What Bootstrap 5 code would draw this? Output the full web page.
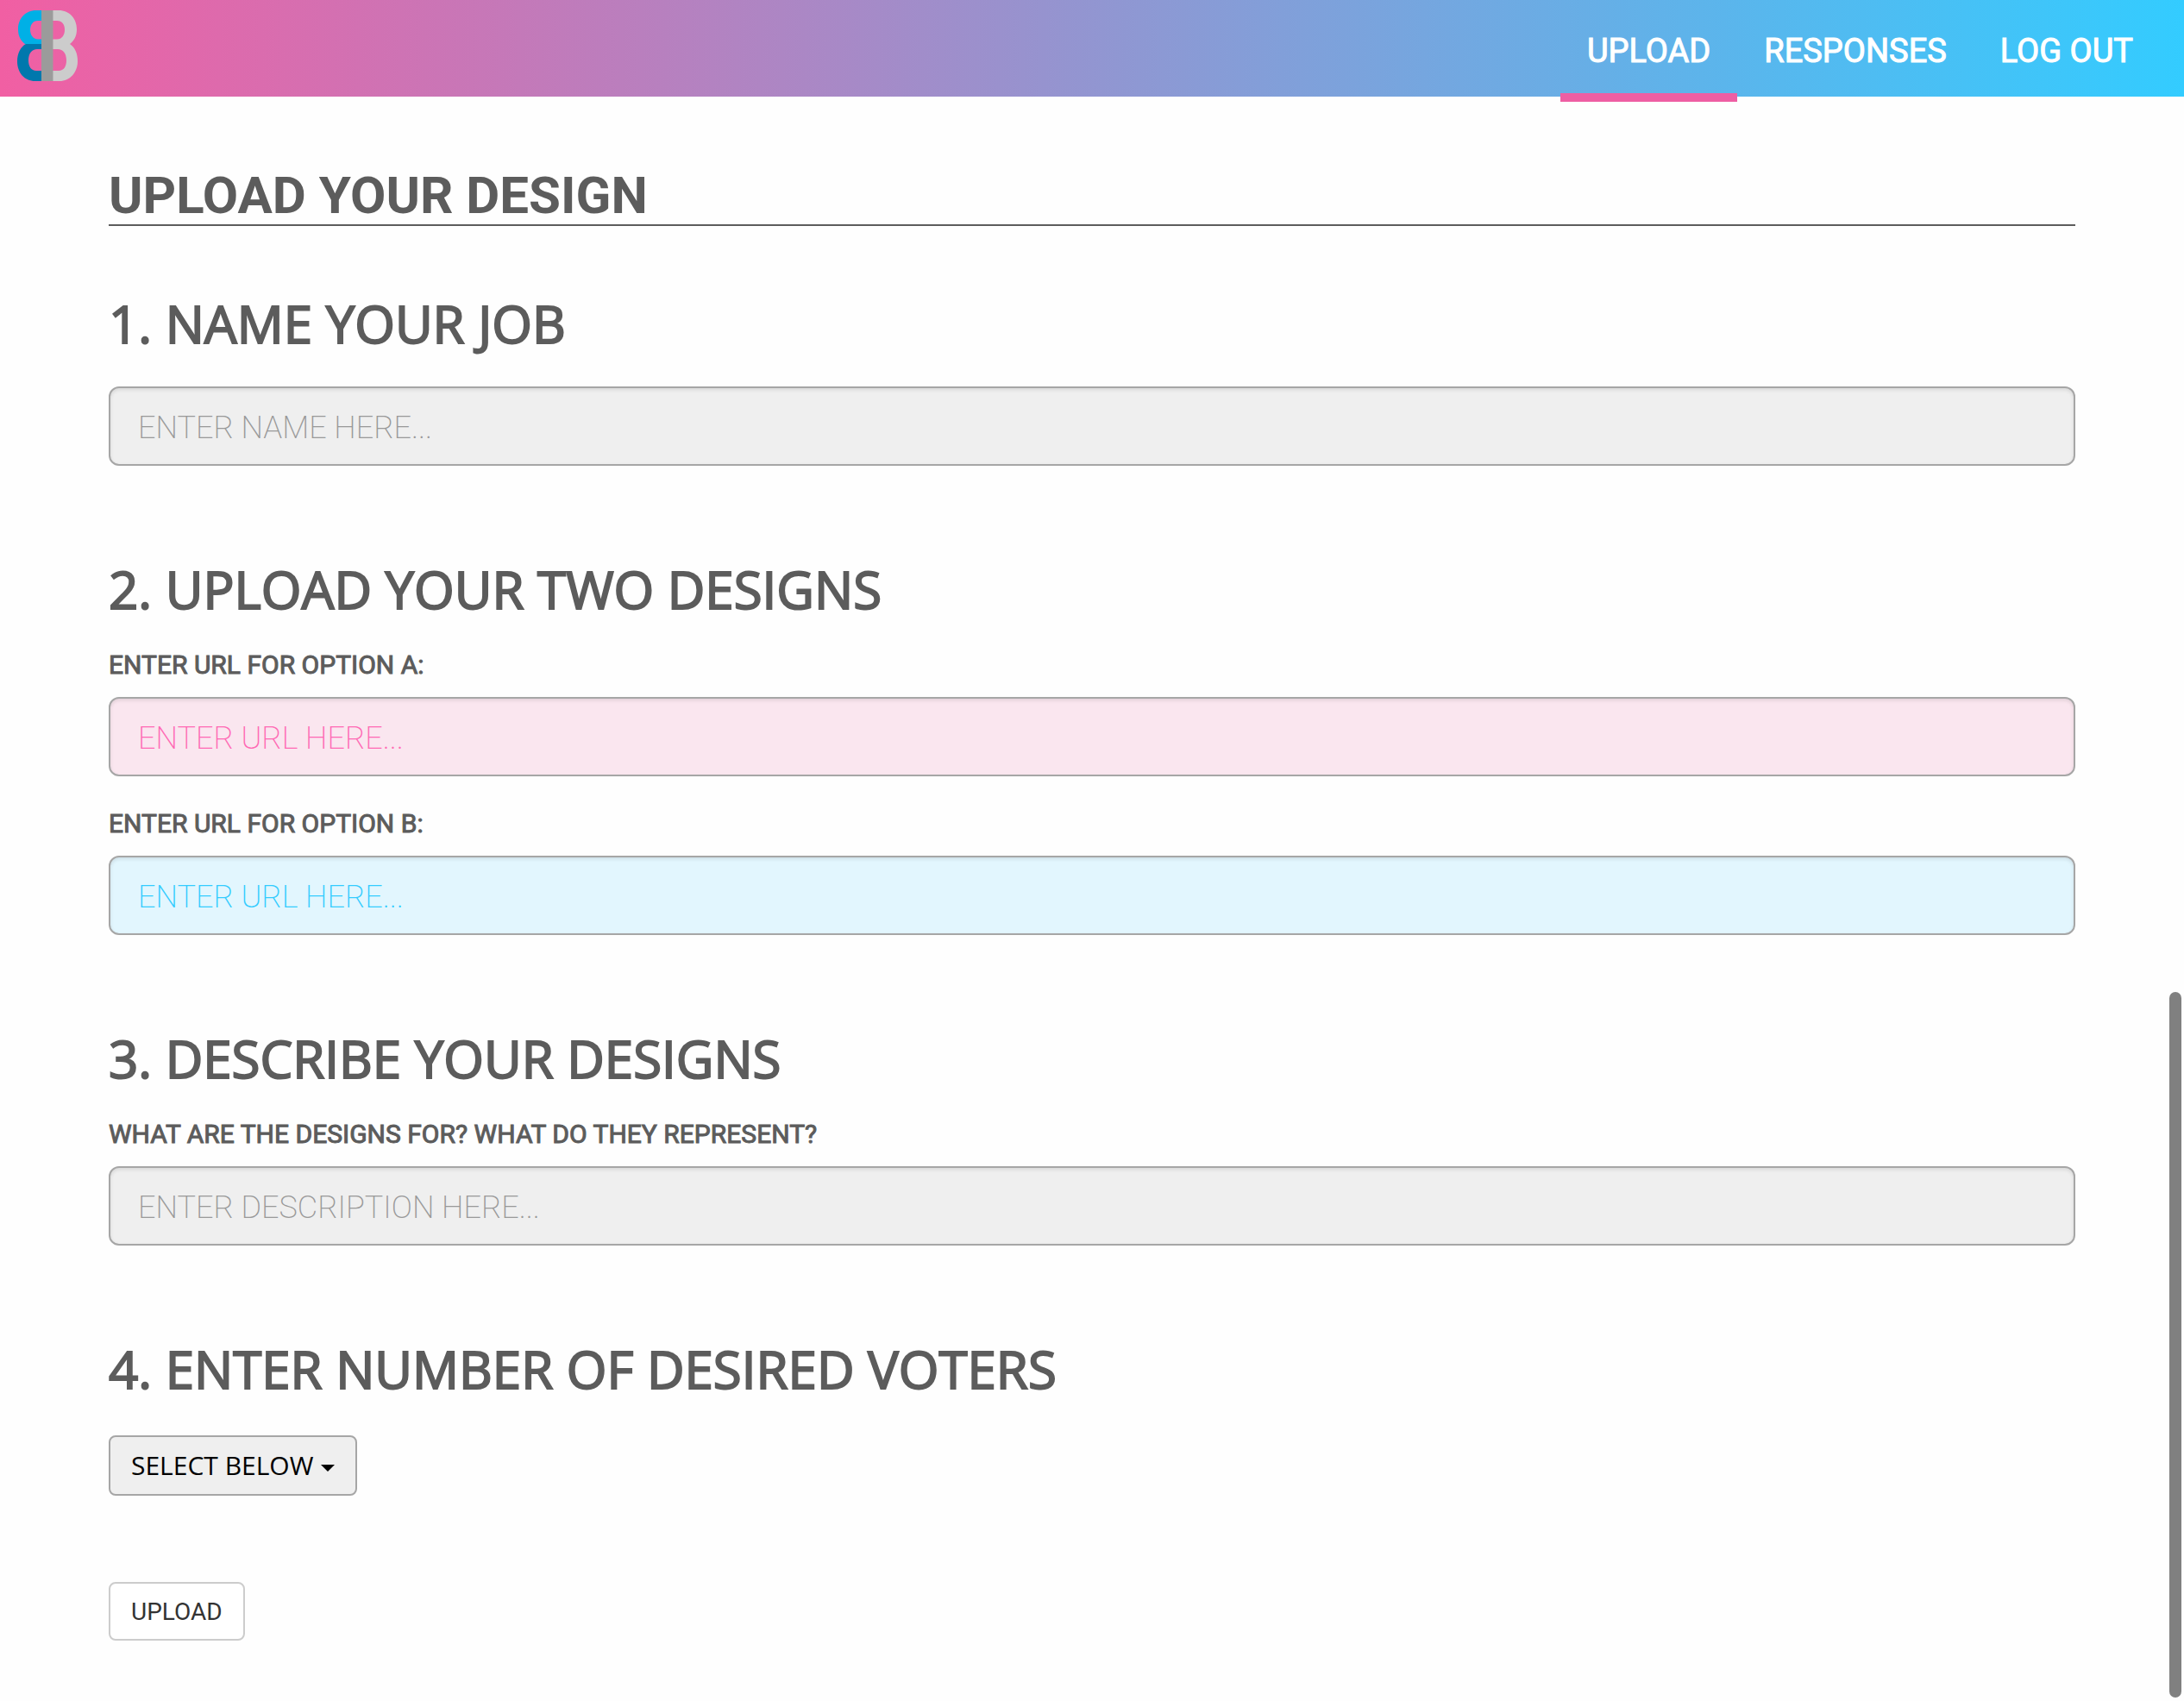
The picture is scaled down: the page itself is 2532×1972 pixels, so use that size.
<!DOCTYPE html>
<html lang="en">
<head>
<meta charset="utf-8">
<meta name="viewport" content="width=device-width, initial-scale=1">
<title>Upload your design</title>
<link href="https://cdn.jsdelivr.net/npm/bootstrap@5.3.0/dist/css/bootstrap.min.css" rel="stylesheet">
<style>
  body { font-family: Roboto, sans-serif; color: #5c5c5c; background: #fefefe; text-transform: uppercase; }
  .site-nav { height: 112px; padding: 0 28px 0 20px; background: linear-gradient(to right, #f15fa3, #33ccff); }
  .site-nav .nav-link { height: 118px; padding: 0 31px; font-size: 38px; line-height: 118px; font-weight: 400; -webkit-text-stroke: 1px; color: #fff; border-bottom: 10px solid transparent; }
  .site-nav .nav-link.active { border-bottom-color: #ee5ea3; }
  .brand-mark { display: block; width: 70px; height: 82px; }
  .page-body { padding: 82px 126px 68px; }
  .page-title { font-size: 60px; line-height: 66px; font-weight: 700; margin-bottom: 78px; border-bottom: 2px solid #5c5c5c; }
  .step { margin-bottom: 108px; }
  .step:last-of-type { margin-bottom: 100px; }
  .step-title { font-family: "Open Sans", sans-serif; font-size: 60px; line-height: 70px; font-weight: 400; -webkit-text-stroke: 2px; margin-bottom: 38px; }
  .step-title.tight { margin-bottom: 32px; }
  .field-label { display: block; font-size: 30px; line-height: 42px; font-weight: 400; -webkit-text-stroke: 1px; margin-bottom: 16px; }
  .field-label.next { margin-top: 34px; }
  .field-box { height: 92px; padding: 3px 32px 0; font-size: 36px; font-weight: 200; text-transform: uppercase; color: #5c5c5c; background: #efefef; border: 2px solid #a6a6a6; border-radius: 12px; box-shadow: inset 0 2px 4px rgba(0,0,0,.1); }
  .field-box::placeholder { color: #999; opacity: 1; }
  .option-a { background: #fae6ef; }
  .option-a::placeholder { color: #ff69b4; }
  .option-b { background: #e2f6fe; }
  .option-b::placeholder { color: #33ccff; }
  .voter-select { width: auto; height: 70px; padding: 0 48px 0 24px; font-family: "Open Sans", sans-serif; font-size: 30px; line-height: 66px; text-transform: uppercase; color: #000; background: #efefef url("data:image/svg+xml,%3Csvg xmlns='http://www.w3.org/2000/svg' viewBox='0 0 16 8'%3E%3Cpath d='M0 0h16L8 8z'/%3E%3C/svg%3E") no-repeat right 24px top 32px / 16px 8px; border: 2px solid #a6a6a6; border-radius: 8px; }
  .send-btn { height: 68px; padding: 1px 24px 0; font-size: 28px; line-height: 64px; text-transform: uppercase; color: #333; background: #fff; border: 2px solid #ccc; border-radius: 8px; }
  .scroll-thumb { position: fixed; right: 3px; bottom: 4px; width: 14px; height: 818px; border-radius: 7px; background: #808080; }
</style>
</head>
<body>
<nav class="site-nav d-flex justify-content-between align-items-start">
  <a href="#" class="pt-2 mt-1" aria-label="Home">
    <svg class="brand-mark" viewBox="0 0 70 82" aria-hidden="true">
      <path fill="#00b0e6" d="M29 0H22C9 0 1 10 1 22c0 8 3 13 8 17h20v-5.500h-5C18 33.500 15 28 15 22.500 15 17 18 12 24 12h5z"/>
      <path fill="#0078ad" d="M29 39H10C4 42 0 50 0 59c0 13 8 23 21 23h8V70h-7c-6 0-9-5-9-12 0-8 4-13 10-13h6z"/>
      <path fill="#ccc" d="M41 0h7c13 0 21 10 21 22 0 8-3 13-8 17 6 4 9 11 9 20 0 13-9 23-21 23h-8V70h7c6 0 9-5 9-12 0-8-4-13-10-13h-6V33.500h5c6 0 9-5 9-11S52 12 46 12h-5z"/>
      <path fill="#9b9b9b" d="M28 0h13.500v82H28z"/>
    </svg>
  </a>
  <div class="nav flex-nowrap">
    <a class="nav-link active" href="#" aria-current="page">Upload</a>
    <a class="nav-link" href="#">Responses</a>
    <a class="nav-link" href="#">Log out</a>
  </div>
</nav>
<main class="page-body">
  <h1 class="page-title">Upload your design</h1>
  <form>
    <section class="step">
      <h2 class="step-title"><label for="job">1. Name your job</label></h2>
      <input class="form-control field-box" id="job" type="text" placeholder="Enter name here...">
    </section>
    <section class="step">
      <h2 class="step-title tight">2. Upload your two designs</h2>
      <label class="field-label" for="urlA">Enter URL for option A:</label>
      <input class="form-control field-box option-a" id="urlA" type="text" placeholder="Enter URL here...">
      <label class="field-label next" for="urlB">Enter URL for option B:</label>
      <input class="form-control field-box option-b" id="urlB" type="text" placeholder="Enter URL here...">
    </section>
    <section class="step">
      <h2 class="step-title tight">3. Describe your designs</h2>
      <label class="field-label" for="desc">What are the designs for? What do they represent?</label>
      <input class="form-control field-box" id="desc" type="text" placeholder="Enter description here...">
    </section>
    <section class="step">
      <h2 class="step-title"><label for="voters">4. Enter number of desired voters</label></h2>
      <div class="pt-1"><select class="form-select voter-select" id="voters"><option>Select below</option></select></div>
    </section>
    <button class="btn send-btn" type="button">Upload</button>
  </form>
</main>
<div class="scroll-thumb" aria-hidden="true"></div>
<script src="https://cdn.jsdelivr.net/npm/bootstrap@5.3.0/dist/js/bootstrap.bundle.min.js"></script>
</body>
</html>
